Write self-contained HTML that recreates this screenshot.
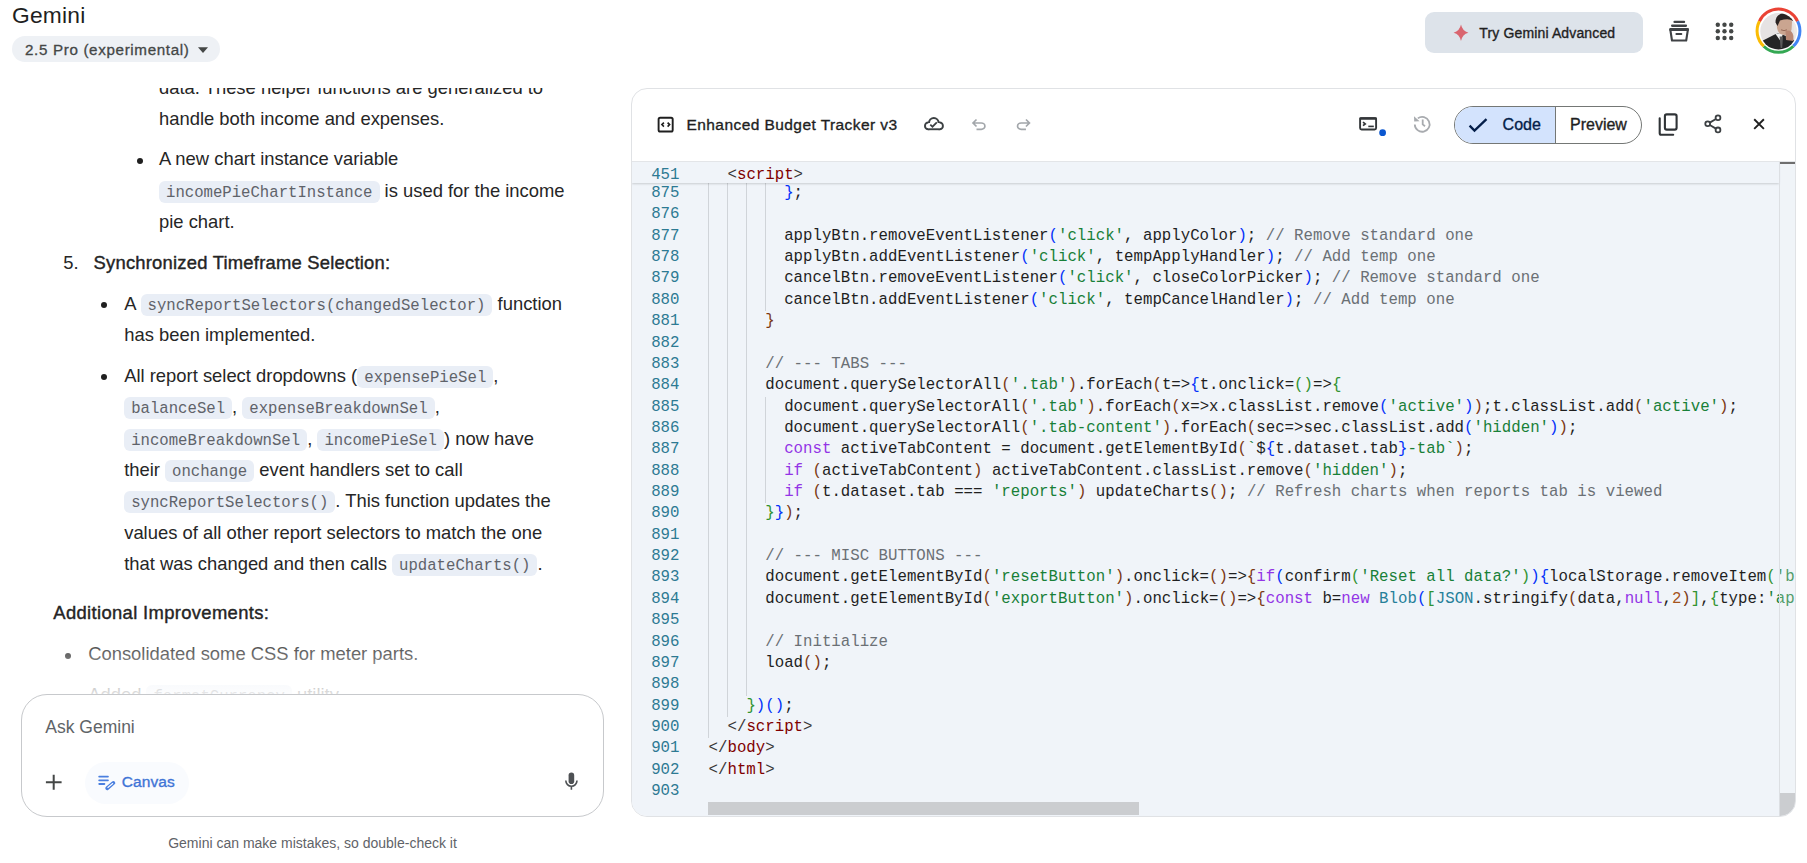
<!DOCTYPE html>
<html><head><meta charset="utf-8">
<style>
*{box-sizing:border-box}
html,body{margin:0;padding:0}
body{width:1807px;height:863px;overflow:hidden;position:relative;background:#ffffff;font-family:"Liberation Sans",sans-serif;color:#1f1f1f}
.abs{position:absolute;white-space:pre}
.t{position:absolute;white-space:pre;font-size:18.4px;line-height:20px;color:#262626}
.chip{font-family:"Liberation Mono",monospace;font-size:15.65px;color:#5f636a;background:#e9eef6;border-radius:6px;padding:3px 7px 1px 7px}
.med{-webkit-text-stroke:0.4px #1f1f1f}
.bul{position:absolute;width:6px;height:6px;border-radius:3px;background:#1f1f1f}
#chat{position:absolute;left:0;top:88px;width:620px;height:606px;overflow:hidden}
#chatin{position:absolute;left:0;top:-88px;width:620px;height:863px}
#fade{position:absolute;left:0;top:543px;width:620px;height:63px;background:linear-gradient(to bottom,rgba(255,255,255,0),rgba(255,255,255,0.86))}
#card{position:absolute;left:631px;top:88px;width:1165px;height:729px;border:1px solid #e0e2e5;border-radius:16px;overflow:hidden;background:#fff}
#cardin{position:absolute;left:-632px;top:-89px;width:1807px;height:863px}
#codebg{position:absolute;left:631px;top:160.5px;width:1165px;height:657px;background:#f0f4f9;border-top:1.5px solid #e3e5e8}
.cl{position:absolute;left:0;width:1807px;height:21.36px;line-height:21.36px;font-family:"Liberation Mono",monospace;font-size:15.74px;white-space:pre;color:#1f1f1f}
.ln{position:absolute;left:620px;width:59.5px;text-align:right;color:#2d7a93}
.ct{position:absolute;left:708.6px}
.ig{position:absolute;width:1px;background:#d0d4d9}
.sticky{height:22px;background:#f0f4f9}
#input{position:absolute;left:21px;top:694px;width:583px;height:123px;border:1px solid #c7c9cc;border-radius:26px;background:#fff}
</style></head><body>

<div id="chat"><div id="chatin">
<div class="t" style="left:159px;top:77.60px">data. These helper functions are generalized to</div>
<div class="t" style="left:159px;top:108.60px">handle both income and expenses.</div>
<div class="t" style="left:159px;top:149.10px">A new chart instance variable</div>
<div class="t" style="left:159px;top:180.50px"><span class="chip">incomePieChartInstance</span> is used for the income</div>
<div class="t" style="left:159px;top:211.90px">pie chart.</div>
<div class="t" style="left:124.2px;top:293.60px">A <span class="chip">syncReportSelectors(changedSelector)</span> function</div>
<div class="t" style="left:124.2px;top:324.60px">has been implemented.</div>
<div class="t" style="left:124.2px;top:365.70px">All report select dropdowns (<span class="chip">expensePieSel</span>,</div>
<div class="t" style="left:124.2px;top:397.10px"><span class="chip">balanceSel</span>, <span class="chip">expenseBreakdownSel</span>,</div>
<div class="t" style="left:124.2px;top:428.60px"><span class="chip">incomeBreakdownSel</span>, <span class="chip">incomePieSel</span>) now have</div>
<div class="t" style="left:124.2px;top:460.00px">their <span class="chip">onchange</span> event handlers set to call</div>
<div class="t" style="left:124.2px;top:491.40px"><span class="chip">syncReportSelectors()</span>. This function updates the</div>
<div class="t" style="left:124.2px;top:522.80px">values of all other report selectors to match the one</div>
<div class="t" style="left:124.2px;top:554.20px">that was changed and then calls <span class="chip">updateCharts()</span>.</div>
<div class="t" style="left:88.2px;top:644.00px">Consolidated some CSS for meter parts.</div>
<div class="t" style="left:88.2px;top:685.10px">Added <span class="chip">formatCurrency</span> utility</div>
<div class="t" style="left:63.2px;top:252.60px">5.</div>
<div class="t med" style="left:93.5px;top:252.60px;letter-spacing:0.23px">Synchronized Timeframe Selection:</div>
<div class="t med" style="left:53.3px;top:603.00px;letter-spacing:0.35px">Additional Improvements:</div>
<div class="bul" style="left:136.5px;top:157.6px"></div>
<div class="bul" style="left:101px;top:302px"></div>
<div class="bul" style="left:101px;top:374px"></div>
<div class="bul" style="left:65px;top:652.7px"></div>
<div class="bul" style="left:65px;top:694px"></div>
</div><div id="fade"></div></div>

<!-- top-left -->
<div class="abs" style="left:12px;top:2px;font-size:22.8px;line-height:26px;letter-spacing:0.2px;color:#1f1f1f">Gemini</div>
<div class="abs" style="left:12px;top:36px;width:208px;height:26px;border-radius:13px;background:#eef1f5"></div>
<div class="abs" style="left:25px;top:40.5px;font-size:15.2px;line-height:18px;letter-spacing:0.65px;color:#444746;-webkit-text-stroke:0.3px #444746">2.5 Pro (experimental)</div>

<!-- top-right -->
<div class="abs" style="left:1425px;top:12px;width:218px;height:41px;border-radius:9px;background:#dde3ea"></div>
<div class="abs" style="left:1479.3px;top:25px;font-size:14px;line-height:16px;letter-spacing:0.14px;color:#1f1f1f;-webkit-text-stroke:0.35px #1f1f1f">Try Gemini Advanced</div>

<!-- card -->
<div id="card"><div id="cardin">
<div id="codebg"></div>
<div class="ig" style="left:708.30px;top:183.00px;height:555.36px"></div>
<div class="ig" style="left:727.19px;top:183.00px;height:534.00px"></div>
<div class="ig" style="left:746.08px;top:183.00px;height:512.64px"></div>
<div class="ig" style="left:764.97px;top:183.00px;height:128.16px"></div>
<div class="ig" style="left:764.97px;top:396.60px;height:106.80px"></div>
<div class="cl" style="top:183.00px"><span class="ln">875</span><span class="ct">        <span style="color:#0431fa">}</span>;</span></div>
<div class="cl" style="top:204.36px"><span class="ln">876</span><span class="ct"></span></div>
<div class="cl" style="top:225.72px"><span class="ln">877</span><span class="ct">        applyBtn.removeEventListener<span style="color:#0431fa">(</span><span style="color:#188038">'click'</span>, applyColor<span style="color:#0431fa">)</span>; <span style="color:#6b7075">// Remove standard one</span></span></div>
<div class="cl" style="top:247.08px"><span class="ln">878</span><span class="ct">        applyBtn.addEventListener<span style="color:#0431fa">(</span><span style="color:#188038">'click'</span>, tempApplyHandler<span style="color:#0431fa">)</span>; <span style="color:#6b7075">// Add temp one</span></span></div>
<div class="cl" style="top:268.44px"><span class="ln">879</span><span class="ct">        cancelBtn.removeEventListener<span style="color:#0431fa">(</span><span style="color:#188038">'click'</span>, closeColorPicker<span style="color:#0431fa">)</span>; <span style="color:#6b7075">// Remove standard one</span></span></div>
<div class="cl" style="top:289.80px"><span class="ln">880</span><span class="ct">        cancelBtn.addEventListener<span style="color:#0431fa">(</span><span style="color:#188038">'click'</span>, tempCancelHandler<span style="color:#0431fa">)</span>; <span style="color:#6b7075">// Add temp one</span></span></div>
<div class="cl" style="top:311.16px"><span class="ln">881</span><span class="ct">      <span style="color:#7b3814">}</span></span></div>
<div class="cl" style="top:332.52px"><span class="ln">882</span><span class="ct"></span></div>
<div class="cl" style="top:353.88px"><span class="ln">883</span><span class="ct">      <span style="color:#6b7075">// --- TABS ---</span></span></div>
<div class="cl" style="top:375.24px"><span class="ln">884</span><span class="ct">      document.querySelectorAll<span style="color:#7b3814">(</span><span style="color:#188038">'.tab'</span><span style="color:#7b3814">)</span>.forEach<span style="color:#7b3814">(</span>t=&gt;<span style="color:#0431fa">{</span>t.onclick=<span style="color:#319331">(</span><span style="color:#319331">)</span>=&gt;<span style="color:#319331">{</span></span></div>
<div class="cl" style="top:396.60px"><span class="ln">885</span><span class="ct">        document.querySelectorAll<span style="color:#7b3814">(</span><span style="color:#188038">'.tab'</span><span style="color:#7b3814">)</span>.forEach<span style="color:#7b3814">(</span>x=&gt;x.classList.remove<span style="color:#0431fa">(</span><span style="color:#188038">'active'</span><span style="color:#0431fa">)</span><span style="color:#7b3814">)</span>;t.classList.add<span style="color:#7b3814">(</span><span style="color:#188038">'active'</span><span style="color:#7b3814">)</span>;</span></div>
<div class="cl" style="top:417.96px"><span class="ln">886</span><span class="ct">        document.querySelectorAll<span style="color:#7b3814">(</span><span style="color:#188038">'.tab-content'</span><span style="color:#7b3814">)</span>.forEach<span style="color:#7b3814">(</span>sec=&gt;sec.classList.add<span style="color:#0431fa">(</span><span style="color:#188038">'hidden'</span><span style="color:#0431fa">)</span><span style="color:#7b3814">)</span>;</span></div>
<div class="cl" style="top:439.32px"><span class="ln">887</span><span class="ct">        <span style="color:#9334e6">const</span> activeTabContent = document.getElementById<span style="color:#7b3814">(</span><span style="color:#188038">`</span><span style="color:#1f1f1f">$</span><span style="color:#0431fa">{</span>t.dataset.tab<span style="color:#0431fa">}</span><span style="color:#188038">-tab`</span><span style="color:#7b3814">)</span>;</span></div>
<div class="cl" style="top:460.68px"><span class="ln">888</span><span class="ct">        <span style="color:#9334e6">if</span> <span style="color:#7b3814">(</span>activeTabContent<span style="color:#7b3814">)</span> activeTabContent.classList.remove<span style="color:#7b3814">(</span><span style="color:#188038">'hidden'</span><span style="color:#7b3814">)</span>;</span></div>
<div class="cl" style="top:482.04px"><span class="ln">889</span><span class="ct">        <span style="color:#9334e6">if</span> <span style="color:#7b3814">(</span>t.dataset.tab === <span style="color:#188038">'reports'</span><span style="color:#7b3814">)</span> updateCharts<span style="color:#7b3814">(</span><span style="color:#7b3814">)</span>; <span style="color:#6b7075">// Refresh charts when reports tab is viewed</span></span></div>
<div class="cl" style="top:503.40px"><span class="ln">890</span><span class="ct">      <span style="color:#319331">}</span><span style="color:#0431fa">}</span><span style="color:#7b3814">)</span>;</span></div>
<div class="cl" style="top:524.76px"><span class="ln">891</span><span class="ct"></span></div>
<div class="cl" style="top:546.12px"><span class="ln">892</span><span class="ct">      <span style="color:#6b7075">// --- MISC BUTTONS ---</span></span></div>
<div class="cl" style="top:567.48px"><span class="ln">893</span><span class="ct">      document.getElementById<span style="color:#7b3814">(</span><span style="color:#188038">'resetButton'</span><span style="color:#7b3814">)</span>.onclick=<span style="color:#7b3814">(</span><span style="color:#7b3814">)</span>=&gt;<span style="color:#7b3814">{</span><span style="color:#9334e6">if</span><span style="color:#0431fa">(</span>confirm<span style="color:#319331">(</span><span style="color:#188038">'Reset all data?'</span><span style="color:#319331">)</span><span style="color:#0431fa">)</span><span style="color:#0431fa">{</span>localStorage.removeItem<span style="color:#319331">(</span><span style="color:#188038">'budgetData'</span><span style="color:#319331">)</span>;location.reload<span style="color:#319331">(</span><span style="color:#319331">)</span>;<span style="color:#0431fa">}</span><span style="color:#7b3814">}</span>;</span></div>
<div class="cl" style="top:588.84px"><span class="ln">894</span><span class="ct">      document.getElementById<span style="color:#7b3814">(</span><span style="color:#188038">'exportButton'</span><span style="color:#7b3814">)</span>.onclick=<span style="color:#7b3814">(</span><span style="color:#7b3814">)</span>=&gt;<span style="color:#7b3814">{</span><span style="color:#9334e6">const</span> b=<span style="color:#9334e6">new</span> <span style="color:#267f99">Blob</span><span style="color:#0431fa">(</span><span style="color:#319331">[</span><span style="color:#267f99">JSON</span>.stringify<span style="color:#7b3814">(</span>data,<span style="color:#9334e6">null</span>,<span style="color:#a5541e">2</span><span style="color:#7b3814">)</span><span style="color:#319331">]</span>,<span style="color:#319331">{</span>type:<span style="color:#188038">'application/json'</span><span style="color:#319331">}</span><span style="color:#0431fa">)</span>;<span style="color:#7b3814">}</span>;</span></div>
<div class="cl" style="top:610.20px"><span class="ln">895</span><span class="ct"></span></div>
<div class="cl" style="top:631.56px"><span class="ln">896</span><span class="ct">      <span style="color:#6b7075">// Initialize</span></span></div>
<div class="cl" style="top:652.92px"><span class="ln">897</span><span class="ct">      load<span style="color:#7b3814">(</span><span style="color:#7b3814">)</span>;</span></div>
<div class="cl" style="top:674.28px"><span class="ln">898</span><span class="ct"></span></div>
<div class="cl" style="top:695.64px"><span class="ln">899</span><span class="ct">    <span style="color:#319331">}</span><span style="color:#0431fa">)</span><span style="color:#0431fa">(</span><span style="color:#0431fa">)</span>;</span></div>
<div class="cl" style="top:717.00px"><span class="ln">900</span><span class="ct">  <span style="color:#383838">&lt;/</span><span style="color:#800000">script</span><span style="color:#383838">></span></span></div>
<div class="cl" style="top:738.36px"><span class="ln">901</span><span class="ct"><span style="color:#383838">&lt;/</span><span style="color:#800000">body</span><span style="color:#383838">></span></span></div>
<div class="cl" style="top:759.72px"><span class="ln">902</span><span class="ct"><span style="color:#383838">&lt;/</span><span style="color:#800000">html</span><span style="color:#383838">></span></span></div>
<div class="cl" style="top:781.08px"><span class="ln">903</span><span class="ct"></span></div>
<div class="abs" style="left:631px;top:162px;width:1148px;height:20.6px;background:#f0f4f9;box-shadow:0 1.5px 2px -0.5px rgba(0,0,0,0.16)"></div><div class="cl" style="top:164.8px"><span class="ln">451</span><span class="ct">  <span style="color:#383838">&lt;</span><span style="color:#800000">script</span><span style="color:#383838">></span></span></div>
<div class="abs" style="left:1779px;top:162px;width:16.5px;height:655px;border-left:1px solid #dcdfe3;background:rgba(240,244,249,0.25)"></div>
<div class="abs" style="left:1780px;top:162px;width:16px;height:2px;background:#6e6e6e"></div>
<div class="abs" style="left:1780px;top:793px;width:16px;height:23px;background:#cbcdd0"></div>
<div class="abs" style="left:708px;top:802px;width:431px;height:13px;background:#cbcdd0"></div>
<div class="abs" style="left:686.5px;top:114.5px;font-size:15.5px;line-height:20px;letter-spacing:0.43px;color:#1f1f1f;-webkit-text-stroke:0.35px #1f1f1f">Enhanced Budget Tracker v3</div>
<div class="abs" style="left:1454px;top:106px;width:188px;height:37.5px;border:1px solid #747775;border-radius:19px;overflow:hidden;background:#fff"><div style="position:absolute;left:0;top:0;width:101px;height:100%;background:#d3e3fd;border-right:1px solid #747775"></div></div>
<div class="abs" style="left:1502.6px;top:115.2px;font-size:16px;line-height:20px;color:#041e49;-webkit-text-stroke:0.35px #041e49">Code</div>
<div class="abs" style="left:1570px;top:115.2px;font-size:16px;line-height:20px;color:#1f1f1f;-webkit-text-stroke:0.35px #1f1f1f">Preview</div>
</div></div>

<!-- input -->
<div id="input"></div>
<div class="abs" style="left:45.3px;top:717px;font-size:17.5px;line-height:20px;color:#606468">Ask Gemini</div>
<div class="abs" style="left:84.7px;top:761.7px;width:104.3px;height:42.6px;border-radius:21.3px;background:#f9fbfe"></div>
<div class="abs" style="left:121.7px;top:772px;font-size:15.5px;line-height:20px;letter-spacing:0.12px;color:#3f74d6;-webkit-text-stroke:0.35px #3f74d6">Canvas</div>
<div class="abs" style="left:168.2px;top:834px;font-size:14px;line-height:18px;color:#5f6368">Gemini can make mistakes, so double-check it</div>


<svg style="position:absolute;left:0;top:0" width="1807" height="863" viewBox="0 0 1807 863">
<!-- model pill triangle -->
<path d="M198 47.2 L208 47.2 L203 53 Z" fill="#444746"/>
<!-- sparkle -->
<path d="M1461 24.6 Q1462.4 31.2 1468.4 32.8 Q1462.4 34.4 1461 41 Q1459.6 34.4 1453.6 32.8 Q1459.6 31.2 1461 24.6 Z" fill="#d9656f"/>
<!-- archive -->
<g fill="#3f4245">
<rect x="1673.4" y="20.8" width="11.8" height="2.2" rx="1.1"/>
<rect x="1671" y="24.6" width="16.1" height="2.3" rx="1.1"/>
<rect x="1669.3" y="28.1" width="19.6" height="3" rx="1"/>
</g>
<path d="M1670.3 29.6 H1687.9 L1686.2 40.5 H1672 Z" fill="none" stroke="#3f4245" stroke-width="2.1" stroke-linejoin="round"/>
<rect x="1675.4" y="32.9" width="6.9" height="2" rx="1" fill="#3f4245"/>
<!-- apps -->
<g fill="#444746">
<circle cx="1717.8" cy="24.8" r="2.2"/><circle cx="1724.5" cy="24.8" r="2.2"/><circle cx="1731.2" cy="24.8" r="2.2"/>
<circle cx="1717.8" cy="31.3" r="2.2"/><circle cx="1724.5" cy="31.3" r="2.2"/><circle cx="1731.2" cy="31.3" r="2.2"/>
<circle cx="1717.8" cy="38" r="2.2"/><circle cx="1724.5" cy="38" r="2.2"/><circle cx="1731.2" cy="38" r="2.2"/>
</g>
<!-- avatar -->
<defs><clipPath id="av"><circle cx="1778.5" cy="31.3" r="18.2"/></clipPath></defs>
<g fill="none" stroke-width="3">
<path d="M1759.4 21.3 A21 21 0 0 1 1797.6 21.3" stroke="#ea4335"/>
<path d="M1797.6 21.3 A21 21 0 0 1 1793.3 46.2" stroke="#4285f4"/>
<path d="M1793.3 46.2 A21 21 0 0 1 1763.7 46.2" stroke="#34a853"/>
<path d="M1763.7 46.2 A21 21 0 0 1 1759.4 21.3" stroke="#fbbc04"/>
</g>
<g clip-path="url(#av)">
<rect x="1758" y="11" width="42" height="42" fill="#e6e3e3"/>
<path d="M1792 12 L1800 12 L1800 40 L1795 40 Z" fill="#efe9e4"/>
<path d="M1758 54 L1760 42 L1777.7 33 L1786 36 L1795 40.8 L1799 54 Z" fill="#252526"/>
<path d="M1775 33.2 L1780.5 41 L1783 33.5 Z" fill="#f0f0f0"/>
<path d="M1779.6 36.5 L1780.6 48 L1782.2 48 L1783 36.5 Z" fill="#5a5a5a"/>
<path d="M1776.5 20 Q1777 14.5 1784 14.5 Q1791.5 15 1792 22 L1791.5 30 Q1789 35.5 1784 35 Q1778 34.5 1777 28 Z" fill="#caa590"/>
<path d="M1775.5 22.5 Q1775.5 13.5 1784.5 13.3 Q1792.5 13.5 1793 21 Q1789 17.8 1780 20.5 L1777.5 26 Z" fill="#2a2322"/>
<path d="M1785.5 31 Q1792 29 1793.4 36 L1793.4 41 L1786 40 Z" fill="#b98874"/>
<path d="M1781 29.8 Q1784 31.5 1787 29.8" stroke="#8a5a4a" stroke-width="0.8" fill="none"/>
</g>
<!-- code box icon -->
<rect x="658.6" y="117.7" width="14.1" height="13.8" rx="1.6" fill="none" stroke="#1f1f1f" stroke-width="1.9"/>
<path d="M663.9 122.6 L661.9 124.6 L663.9 126.6 M667.6 122.6 L669.6 124.6 L667.6 126.6" fill="none" stroke="#1f1f1f" stroke-width="1.6"/>
<!-- cloud done -->
<g fill="#3c4043">
<circle cx="928.3" cy="125.9" r="4.3"/><circle cx="933.8" cy="122.7" r="5.7"/><circle cx="939.6" cy="125.9" r="4.3"/><rect x="928.3" y="123" width="11.3" height="7.2"/>
</g>
<g fill="#ffffff">
<circle cx="928.3" cy="125.9" r="2.4"/><circle cx="933.8" cy="122.7" r="3.8"/><circle cx="939.6" cy="125.9" r="2.4"/><rect x="928.3" y="123" width="11.3" height="5.3"/>
</g>
<path d="M930.3 124.6 L932.5 126.7 L936.8 122.4" fill="none" stroke="#3c4043" stroke-width="1.7"/>
<!-- undo / redo -->
<g fill="none" stroke="#a3a7ab" stroke-width="1.7">
<path d="M976.5 119.5 L973 123 L976.5 126.5 M973.3 123 H981.3 A3.6 3.2 0 0 1 981.3 129.4 H976.5"/>
<path d="M1025.95 119.5 L1029.45 123 L1025.95 126.5 M1029.15 123 H1021.15 A3.6 3.2 0 0 0 1021.15 129.4 H1025.95"/>
</g>
<!-- terminal -->
<rect x="1360.1" y="118.1" width="16" height="11.4" rx="1.5" fill="none" stroke="#333639" stroke-width="1.9"/>
<rect x="1359.3" y="117.2" width="17.6" height="2.6" rx="1" fill="#333639"/>
<path d="M1363 122.2 L1365.2 123.9 L1363 125.6" fill="none" stroke="#333639" stroke-width="1.7"/>
<rect x="1368.3" y="125.6" width="5.5" height="1.6" fill="#333639"/>
<circle cx="1382.6" cy="132.7" r="4.6" fill="#fff"/>
<circle cx="1382.6" cy="132.7" r="3.4" fill="#0b57d0"/>
<!-- history -->
<g fill="none" stroke="#a8abaf" stroke-width="1.8">
<path d="M1414.8 124.4 A7.4 7.4 0 1 0 1417.8 118.4"/>
<path d="M1422.7 119.4 V124.4 L1425 126.3"/>
</g>
<path d="M1414 116.2 L1414.2 121.6 L1419.6 121.2 Z" fill="#a8abaf"/>
<!-- check -->
<path d="M1469.6 125.6 L1474.5 130.6 L1486.5 119.2" fill="none" stroke="#041e49" stroke-width="2.3"/>
<!-- copy -->
<rect x="1664.9" y="114.35" width="11.7" height="15.3" rx="1.8" fill="none" stroke="#2f3336" stroke-width="2.1"/>
<path d="M1659.7 118.3 V133.3 Q1659.7 134.8 1661.2 134.8 H1673.2" fill="none" stroke="#2f3336" stroke-width="2.1" stroke-linecap="round"/>
<!-- share -->
<g fill="none" stroke="#3c4043" stroke-width="1.8">
<circle cx="1718" cy="117.8" r="2.4"/><circle cx="1707.7" cy="123.8" r="2.4"/><circle cx="1718" cy="129.9" r="2.4"/>
<path d="M1709.8 122.6 L1715.9 119 M1709.8 125 L1715.9 128.6"/>
</g>
<!-- close -->
<path d="M1754.2 119.3 L1763.9 128.9 M1763.9 119.3 L1754.2 128.9" fill="none" stroke="#1f1f1f" stroke-width="1.9"/>
<!-- plus -->
<path d="M53.7 774.7 V789.8 M45.9 782.2 H61.6" fill="none" stroke="#444746" stroke-width="2"/>
<!-- canvas icon -->
<g fill="#4a7fdf">
<rect x="98.3" y="775.8" width="10.5" height="1.8" rx="0.8"/>
<rect x="98.3" y="779.4" width="10.5" height="1.8" rx="0.8"/>
<rect x="98.3" y="783.1" width="7" height="1.8" rx="0.8"/>
</g>
<path d="M107.2 788.2 L113.4 782.9" stroke="#4a7fdf" stroke-width="3.8" stroke-linecap="round"/>
<path d="M107.9 787.5 L112.7 783.5" stroke="#f9fbfe" stroke-width="1.1" stroke-linecap="round"/>
<!-- mic -->
<rect x="568.6" y="772.6" width="5.6" height="11.4" rx="2.8" fill="#4e5154"/>
<path d="M565.8 780.6 A5.6 5.6 0 0 0 577 780.6 M571.4 786.2 V789.8" fill="none" stroke="#4e5154" stroke-width="1.6"/>
</svg>

</body></html>
